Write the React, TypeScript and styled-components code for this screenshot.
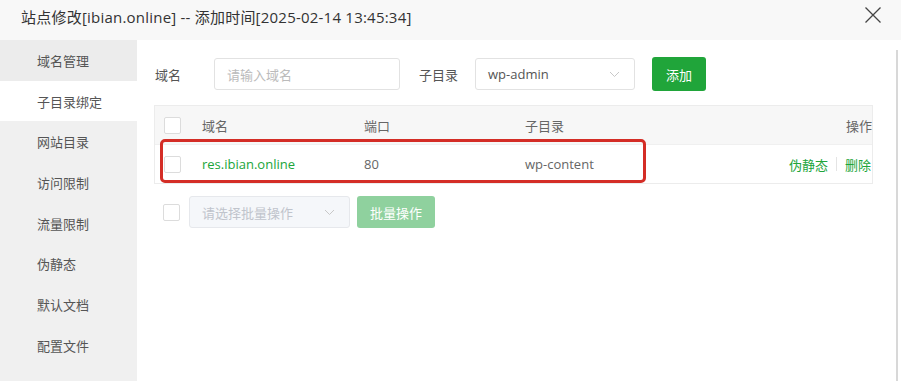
import React from 'react';
import styled, { createGlobalStyle } from 'styled-components';

const GlobalStyle = createGlobalStyle`
  html, body {
    margin: 0;
    padding: 0;
    background: #ffffff;
  }
  body {
    font-family: "Open Sans", "Noto Sans CJK SC", sans-serif;
    color: #333;
  }
`;

// whole dialog
const Dialog = styled.div`
  width: 901px;
  height: 381px;
  display: flex;
  flex-direction: column;
  overflow: hidden;
  background: #fff;
`;

const Header = styled.div`
  height: 40px;
  flex-shrink: 0;
  display: flex;
  align-items: center;
  justify-content: space-between;
  padding: 0 18px 0 21px;
  background: #f8f8f8;
  font-size: 15px;
  color: #333;
`;

const Title = styled.div`
  margin-top: -7px;
  letter-spacing: 0.22px;
`;

const CloseBtn = styled.div`
  width: 20px;
  height: 20px;
  margin-top: -11px;
  display: flex;
  align-items: center;
  justify-content: center;
`;

const Body = styled.div`
  flex: 1;
  display: flex;
  min-height: 0;
`;

const Sidebar = styled.div`
  width: 137px;
  flex-shrink: 0;
  background: #f0f0f0;
  display: flex;
  flex-direction: column;
`;

const NavItem = styled.div<{ $active?: boolean; $hover?: boolean }>`
  height: 40.7px;
  display: flex;
  align-items: center;
  padding-left: 37px;
  font-size: 13px;
  color: #555;
  background: ${p => (p.$active ? '#ffffff' : p.$hover ? '#ececec' : 'transparent')};
`;

const Content = styled.div`
  flex: 1;
  position: relative;
  padding: 7px 23px 0 17px;
  border-right: 2px solid #d8d8d8;
  margin-right: 3px;
  margin-top: 10px;
`;

const FormRow = styled.div`
  display: flex;
  align-items: center;
  height: 34px;
  font-size: 13px;
  color: #555;
`;

const Label = styled.span<{ $w: number }>`
  width: ${p => p.$w}px;
  padding-left: 1px;
`;

const TextInput = styled.div<{ $w: number }>`
  width: ${p => p.$w}px;
  height: 32px;
  box-sizing: border-box;
  border: 1px solid #e2e2e2;
  border-radius: 3px;
  display: flex;
  align-items: center;
  padding-left: 12px;
  color: #bbb;
  font-size: 13px;
`;

const SelectBox = styled.div<{ $w: number; $disabled?: boolean }>`
  width: ${p => p.$w}px;
  height: 32px;
  box-sizing: border-box;
  border: 1px solid ${p => (p.$disabled ? '#e6e8ec' : '#e2e2e2')};
  background: ${p => (p.$disabled ? '#f5f7fa' : '#fff')};
  border-radius: 3px;
  display: flex;
  align-items: center;
  justify-content: space-between;
  padding: 0 14px 0 12px;
  color: ${p => (p.$disabled ? '#c0c4cc' : '#555')};
  font-size: 13px;
`;

const GreenButton = styled.div<{ $w: number; $disabled?: boolean }>`
  width: ${p => p.$w}px;
  height: ${p => (p.$disabled ? 32 : 34)}px;
  box-sizing: border-box;
  border-radius: 3px;
  background: ${p => (p.$disabled ? '#8fd19e' : '#20a53a')};
  color: #fff;
  display: flex;
  align-items: center;
  justify-content: center;
  font-size: 13px;
`;

const Table = styled.div`
  margin-top: 14px;
  border: 1px solid #ececec;
  font-size: 13px;
  color: #666;
`;

const Row = styled.div<{ $head?: boolean }>`
  height: 38px;
  display: grid;
  grid-template-columns: 38px 162px 161px 1fr 120px;
  align-items: center;
  padding: 0 0 0 9px;
  background: ${p => (p.$head ? '#f7f7f7' : '#fff')};
  border-top: ${p => (p.$head ? 'none' : '1px solid #f0f0f0')};
`;

const Check = styled.div`
  width: 17px;
  height: 17px;
  box-sizing: border-box;
  border: 1px solid #dcdcdc;
  border-radius: 2px;
  background: #fff;
`;

const Cell = styled.span<{ $green?: boolean }>`
  color: ${p => (p.$green ? '#20a53a' : '#666')};
`;

const Ops = styled.div<{ $head?: boolean }>`
  display: flex;
  justify-content: flex-end;
  align-items: center;
  padding-right: ${p => (p.$head ? 0 : 1)}px;
  color: ${p => (p.$head ? '#666' : '#20a53a')};
`;

const Sep = styled.span`
  width: 1px;
  height: 14px;
  background: #e4e4e4;
  margin: 0 8px;
`;

const Highlight = styled.div`
  position: absolute;
  left: 23px;
  top: 89px;
  width: 486px;
  height: 44px;
  box-sizing: border-box;
  border: 3px solid #d42d26;
  border-radius: 5px;
  pointer-events: none;
`;

const BatchRow = styled.div`
  display: flex;
  align-items: center;
  gap: 7px;
  margin-top: 12px;
  padding-left: 9px;
`;

const Chevron = () => (
  <svg width="11" height="7" viewBox="0 0 11 7">
    <path d="M1 1l4.5 4.5L10 1" fill="none" stroke="#c8c8c8" strokeWidth="1" />
  </svg>
);

const navItems = ['域名管理', '子目录绑定', '网站目录', '访问限制', '流量限制', '伪静态', '默认文档', '配置文件'];

export default function App() {
  return (
    <>
      <GlobalStyle />
      <Dialog>
        <Header>
          <Title>站点修改[ibian.online] -- 添加时间[2025-02-14 13:45:34]</Title>
          <CloseBtn>
            <svg width="18" height="18" viewBox="0 0 18 18">
              <path d="M1.5 1.5l15 15M16.5 1.5l-15 15" stroke="#444" strokeWidth="1.3" />
            </svg>
          </CloseBtn>
        </Header>
        <Body>
          <Sidebar>
            {navItems.map((n, i) => (
              <NavItem key={n} $active={i === 1} $hover={i === 0}>
                {n}
              </NavItem>
            ))}
          </Sidebar>
          <Content>
            <FormRow>
              <Label $w={59}>域名</Label>
              <TextInput $w={186}>请输入域名</TextInput>
              <Label $w={56} style={{ marginLeft: 18 }}>子目录</Label>
              <SelectBox $w={160}>
                <span>wp-admin</span>
                <Chevron />
              </SelectBox>
              <GreenButton $w={54} style={{ marginLeft: 17 }}>添加</GreenButton>
            </FormRow>
            <Table>
              <Row $head>
                <Check />
                <Cell>域名</Cell>
                <Cell>端口</Cell>
                <Cell>子目录</Cell>
                <Ops $head>操作</Ops>
              </Row>
              <Row>
                <Check />
                <Cell $green>res.ibian.online</Cell>
                <Cell>80</Cell>
                <Cell>wp-content</Cell>
                <Ops>
                  伪静态<Sep />删除
                </Ops>
              </Row>
            </Table>
            <Highlight />
            <BatchRow>
              <Check />
              <SelectBox $w={161} $disabled style={{ marginLeft: 2 }}>
                <span>请选择批量操作</span>
                <Chevron />
              </SelectBox>
              <GreenButton $w={78} $disabled>批量操作</GreenButton>
            </BatchRow>
          </Content>
        </Body>
      </Dialog>
    </>
  );
}
